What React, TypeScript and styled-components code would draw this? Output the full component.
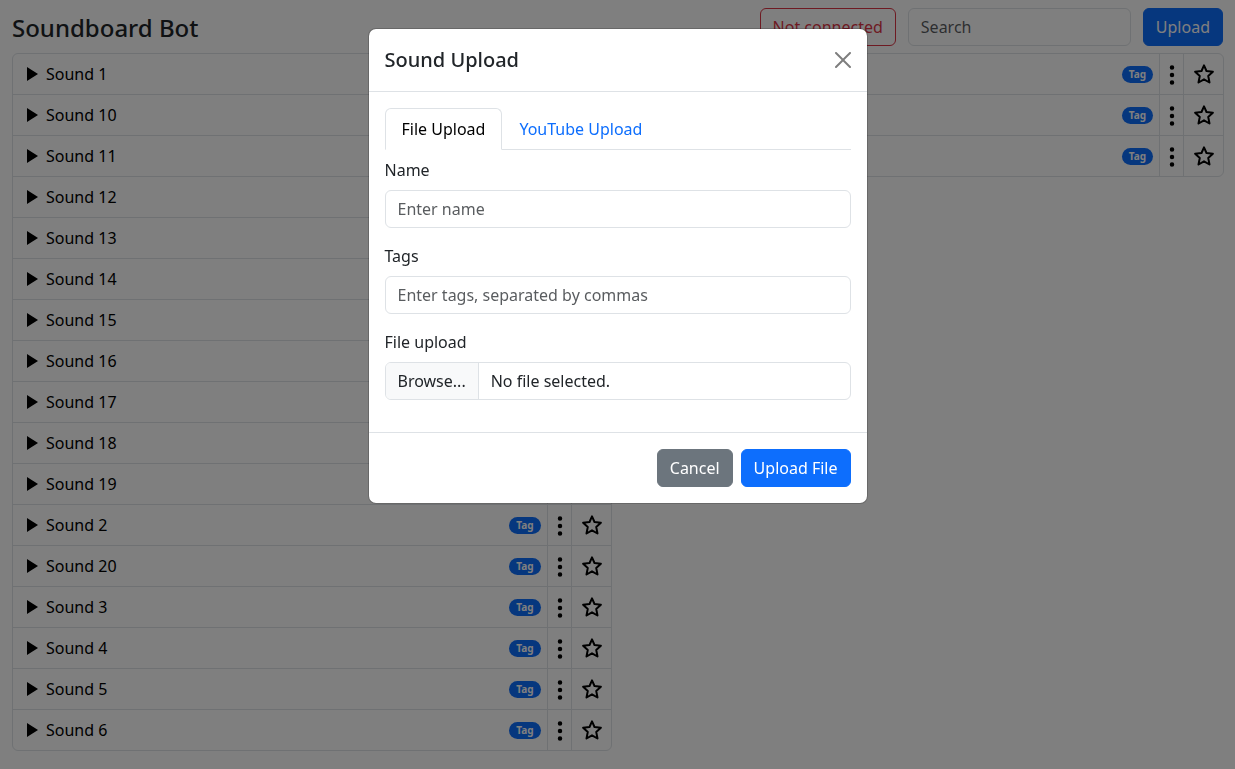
import React from "react";
import styled, { createGlobalStyle, css } from "styled-components";

const GlobalStyle = createGlobalStyle`
  *, *::before, *::after { box-sizing: border-box; }
  body {
    margin: 0;
    background: #fff;
    color: #212529;
    font: 400 16px/24px "Noto Sans", "Liberation Sans", sans-serif;
  }
  button, input { font: inherit; }
  h1, h2 { margin: 0; font-weight: 500; }
`;

const line = "#dee2e6";

const Page = styled.div`
  padding: 8px 12px;
`;

const Header = styled.header`
  display: flex;
  align-items: center;
  gap: 12px;
  margin-bottom: 7px;
`;

const Brand = styled.h1`
  flex: 1;
  font-size: 24px;
  line-height: 29px;
`;

type Variant = "primary" | "secondary" | "outline";

const variants = {
  primary: css`
    background: #0d6efd;
    border-color: #0d6efd;
    color: #fff;
  `,
  secondary: css`
    background: #6c757d;
    border-color: #6c757d;
    color: #fff;
  `,
  outline: css`
    background: transparent;
    border-color: #dc3545;
    color: #dc3545;
  `,
};

const Button = styled.button<{ $variant: Variant }>`
  padding: 6px 12px;
  border: 1px solid;
  border-radius: 6px;
  white-space: nowrap;
  cursor: pointer;
  ${({ $variant }) => variants[$variant]}
`;

const TextInput = styled.input`
  display: block;
  width: 100%;
  height: 38px;
  padding: 6px 12px;
  border: 1px solid ${line};
  border-radius: 6px;
  background: #fff;
  color: #212529;
  &::placeholder {
    color: rgba(33, 37, 41, 0.75);
    opacity: 1;
  }
`;

const SearchBox = styled(TextInput)`
  width: 223px;
`;

const Columns = styled.main`
  display: grid;
  grid-template-columns: repeat(2, minmax(0, 1fr));
  gap: 13px;
  align-items: start;
  margin-right: -1px;
`;

const SoundList = styled.ul`
  margin: 0;
  padding: 0;
  list-style: none;
  border: 1px solid ${line};
  border-radius: 6px;
  overflow: hidden;
`;

const SoundRow = styled.li`
  display: flex;
  height: 41px;
  border-bottom: 1px solid ${line};
  &:last-child {
    height: 40px;
    border-bottom: 0;
  }
`;

const RowButton = styled.button`
  display: flex;
  align-items: center;
  padding: 0;
  border: 0;
  background: transparent;
  color: #000;
  cursor: pointer;
  svg {
    flex-shrink: 0;
  }
`;

const PlayButton = styled(RowButton)`
  flex: 1;
  gap: 3px;
  padding: 0 6px;
`;

const SoundName = styled.span`
  flex: 1;
  text-align: left;
`;

const MenuButton = styled(RowButton)`
  width: 24px;
  padding-top: 1px;
  border-left: 1px solid ${line};
`;

const StarButton = styled(RowButton)`
  width: 40px;
  padding-left: 8px;
  border-left: 1px solid ${line};
`;

const Badge = styled.span`
  padding: 3px 7px;
  border-radius: 9px;
  background: #0d6efd;
  color: #fff;
  font-size: 10px;
  line-height: 11px;
  font-weight: 700;
`;

const Overlay = styled.div`
  position: fixed;
  inset: 0;
  overflow: auto;
  background: rgba(0, 0, 0, 0.5);
`;

const Dialog = styled.section`
  max-width: 500px;
  margin: 28px auto;
  border: 1px solid rgba(0, 0, 0, 0.18);
  border-radius: 8px;
  background: #fff;
  background-clip: padding-box;
`;

const DialogHeader = styled.div`
  display: flex;
  align-items: center;
  justify-content: space-between;
  padding: 16px;
  border-bottom: 1px solid ${line};
`;

const DialogTitle = styled.h2`
  font-size: 20px;
  line-height: 30px;
`;

const CloseButton = styled.button`
  display: flex;
  padding: 0;
  border: 0;
  background: transparent;
  color: #000;
  opacity: 0.5;
  cursor: pointer;
`;

const DialogBody = styled.div`
  padding: 16px;
`;

const Tabs = styled.div`
  display: flex;
  margin-bottom: 8px;
  border-bottom: 1px solid ${line};
`;

const Tab = styled.button<{ $active?: boolean }>`
  margin-bottom: -1px;
  padding: 8px 16px;
  border: 1px solid transparent;
  border-radius: 6px 6px 0 0;
  background: transparent;
  color: #0d6efd;
  cursor: pointer;
  ${({ $active }) =>
    $active &&
    css`
      border-color: ${line} ${line} #fff;
      background: #fff;
      color: #000;
    `}
`;

const Field = styled.div`
  margin-bottom: 16px;
`;

const Label = styled.label`
  display: block;
  margin-bottom: 8px;
`;

const FileInput = styled.input`
  position: absolute;
  inset: 0;
  width: 100%;
  opacity: 0;
  cursor: pointer;
`;

const FilePicker = styled.div`
  position: relative;
  display: flex;
  border: 1px solid ${line};
  border-radius: 6px;
  overflow: hidden;
`;

const Browse = styled.span`
  padding: 6px 12px;
  border-right: 1px solid ${line};
  background: #f8f9fa;
`;

const FileName = styled.span`
  padding: 6px 12px;
`;

const DialogFooter = styled.div`
  display: flex;
  justify-content: flex-end;
  gap: 8px;
  padding: 16px;
  border-top: 1px solid ${line};
`;

const PlayIcon = () => (
  <svg width="24" height="24" viewBox="0 0 24 24" fill="currentColor" aria-hidden="true">
    <path d="M8 5v14l11-7z" />
  </svg>
);

const DotsIcon = () => (
  <svg width="24" height="24" viewBox="0 0 16 16" fill="currentColor" aria-hidden="true">
    <path d="M9.5 13a1.5 1.5 0 1 1-3 0 1.5 1.5 0 0 1 3 0m0-5a1.5 1.5 0 1 1-3 0 1.5 1.5 0 0 1 3 0m0-5a1.5 1.5 0 1 1-3 0 1.5 1.5 0 0 1 3 0" />
  </svg>
);

const StarIcon = () => (
  <svg
    width="24"
    height="24"
    viewBox="0 0 24 24"
    fill="none"
    stroke="currentColor"
    strokeWidth="2"
    strokeLinejoin="round"
    aria-hidden="true"
  >
    <path d="M12 3.4l2.5 5.6 6.4.7-4.7 4.2 1.3 6.6L12 17.3l-5.5 3.2 1.3-6.6-4.7-4.2 6.4-.7z" />
  </svg>
);

const CloseIcon = () => (
  <svg width="16" height="16" viewBox="0 0 16 16" fill="currentColor" aria-hidden="true">
    <path d="M.293.293a1 1 0 0 1 1.414 0L8 6.586 14.293.293a1 1 0 1 1 1.414 1.414L9.414 8l6.293 6.293a1 1 0 0 1-1.414 1.414L8 9.414l-6.293 6.293a1 1 0 0 1-1.414-1.414L6.586 8 .293 1.707a1 1 0 0 1 0-1.414z" />
  </svg>
);

const columns = [
  [1, 10, 11, 12, 13, 14, 15, 16, 17, 18, 19, 2, 20, 3, 4, 5, 6],
  [7, 8, 9],
];

function Sound({ id }: { id: number }) {
  return (
    <SoundRow>
      <PlayButton type="button">
        <PlayIcon />
        <SoundName>Sound {id}</SoundName>
        <Badge>Tag</Badge>
      </PlayButton>
      <MenuButton type="button" aria-label={`Options for Sound ${id}`}>
        <DotsIcon />
      </MenuButton>
      <StarButton type="button" aria-label={`Favorite Sound ${id}`}>
        <StarIcon />
      </StarButton>
    </SoundRow>
  );
}

function UploadDialog() {
  return (
    <Overlay>
      <Dialog role="dialog" aria-modal="true" aria-labelledby="upload-title">
        <DialogHeader>
          <DialogTitle id="upload-title">Sound Upload</DialogTitle>
          <CloseButton type="button" aria-label="Close">
            <CloseIcon />
          </CloseButton>
        </DialogHeader>
        <DialogBody>
          <Tabs role="tablist">
            <Tab type="button" role="tab" aria-selected="true" $active>
              File Upload
            </Tab>
            <Tab type="button" role="tab" aria-selected="false">
              YouTube Upload
            </Tab>
          </Tabs>
          <Field>
            <Label htmlFor="sound-name">Name</Label>
            <TextInput id="sound-name" type="text" placeholder="Enter name" />
          </Field>
          <Field>
            <Label htmlFor="sound-tags">Tags</Label>
            <TextInput id="sound-tags" type="text" placeholder="Enter tags, separated by commas" />
          </Field>
          <Field>
            <Label htmlFor="sound-file">File upload</Label>
            <FilePicker>
              <Browse>Browse...</Browse>
              <FileName>No file selected.</FileName>
              <FileInput id="sound-file" type="file" />
            </FilePicker>
          </Field>
        </DialogBody>
        <DialogFooter>
          <Button type="button" $variant="secondary">
            Cancel
          </Button>
          <Button type="button" $variant="primary">
            Upload File
          </Button>
        </DialogFooter>
      </Dialog>
    </Overlay>
  );
}

export default function App() {
  return (
    <>
      <GlobalStyle />
      <Page>
        <Header>
          <Brand>Soundboard Bot</Brand>
          <Button type="button" $variant="outline">
            Not connected
          </Button>
          <SearchBox type="search" placeholder="Search" aria-label="Search" />
          <Button type="button" $variant="primary">
            Upload
          </Button>
        </Header>
        <Columns>
          {columns.map((ids) => (
            <SoundList key={ids[0]}>
              {ids.map((id) => (
                <Sound key={id} id={id} />
              ))}
            </SoundList>
          ))}
        </Columns>
      </Page>
      <UploadDialog />
    </>
  );
}
